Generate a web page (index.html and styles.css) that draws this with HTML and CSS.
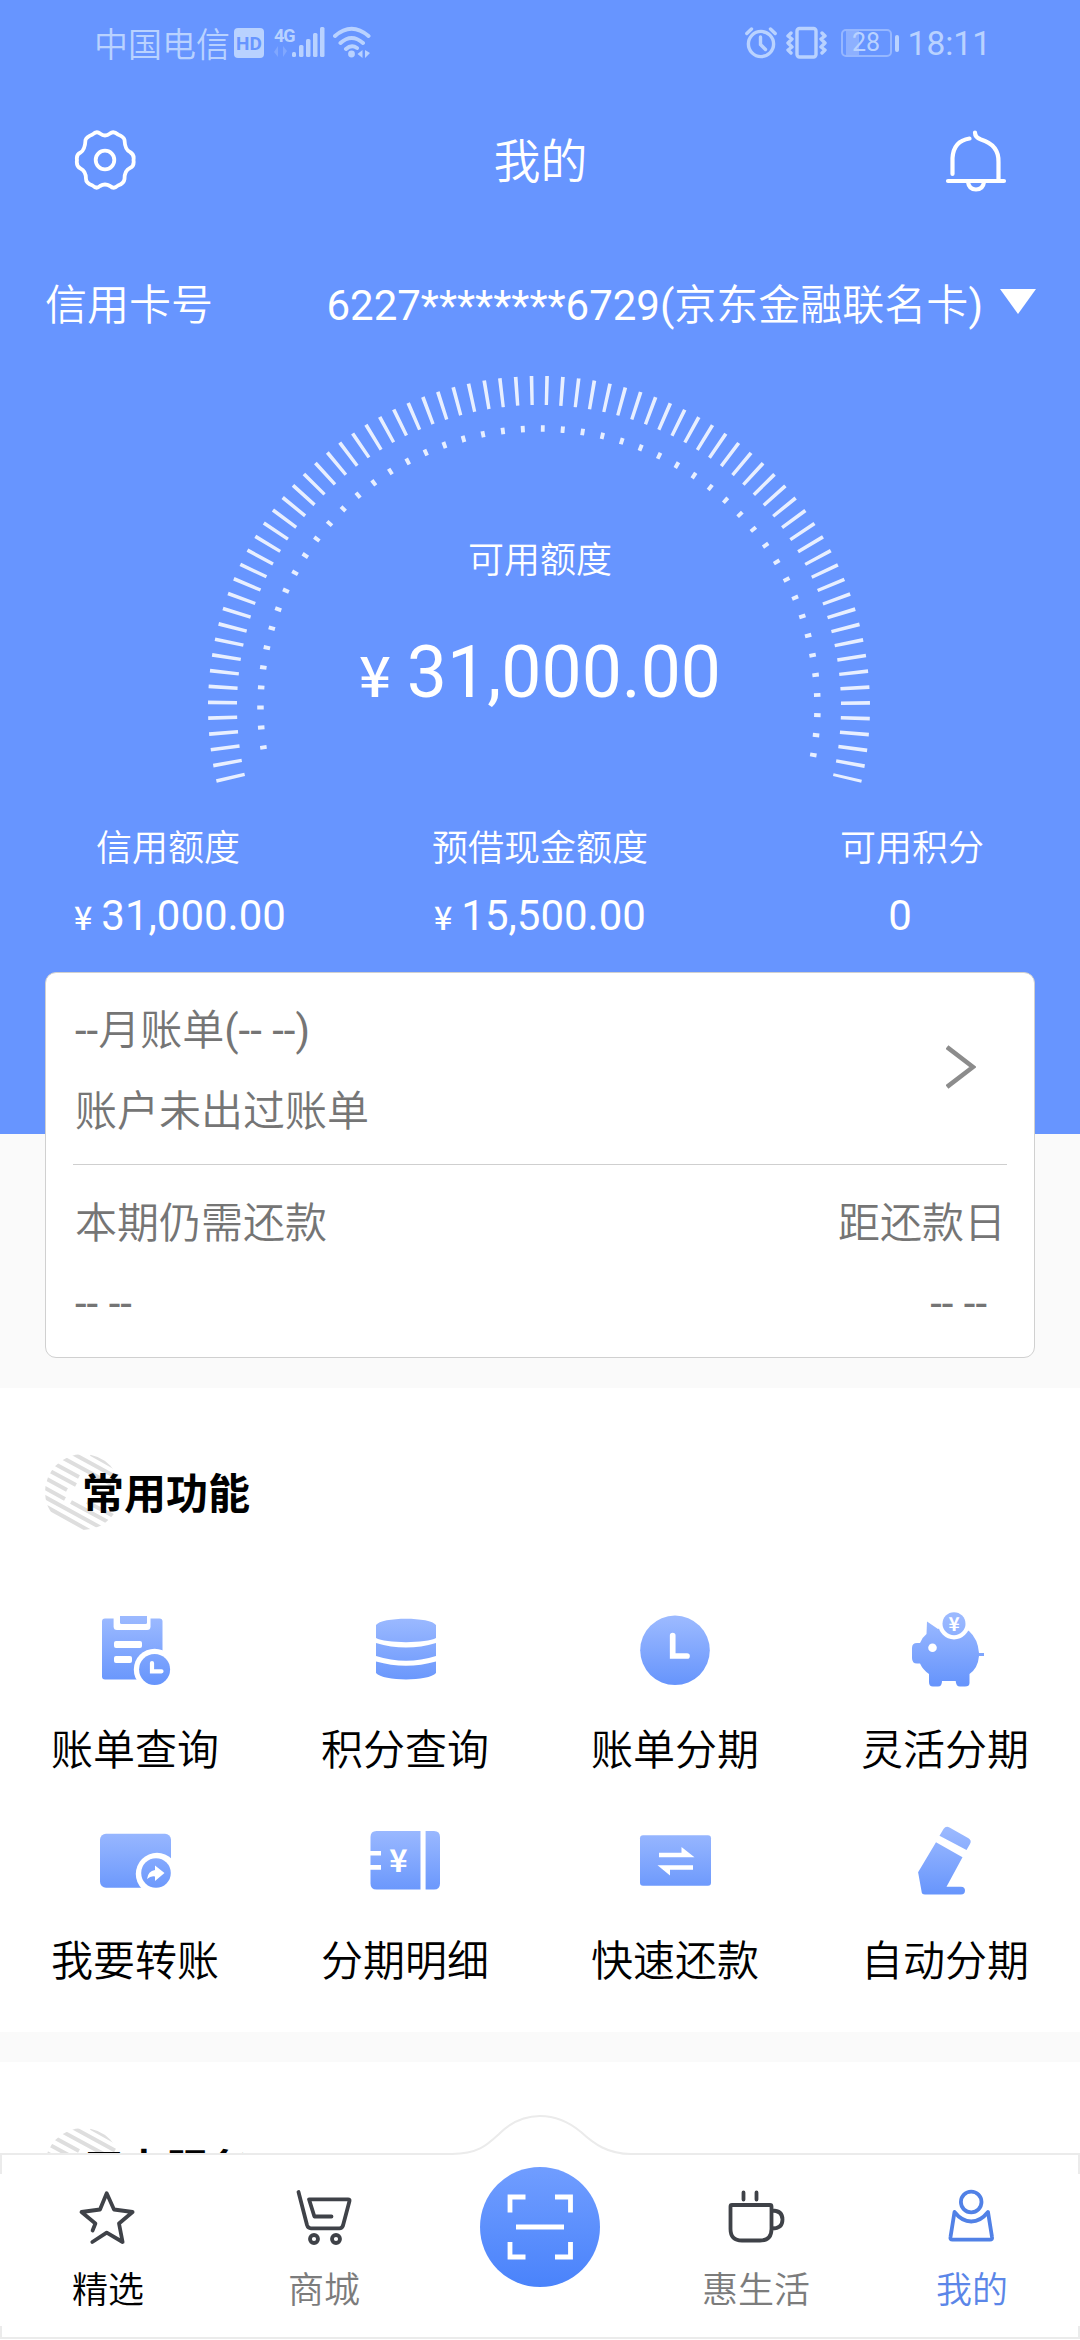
FILE: index.html
```html
<!DOCTYPE html>
<html lang="zh-CN">
<head>
<meta charset="utf-8">
<title>我的</title>
<link rel="stylesheet" href="styles.css">
</head>
<body>
<svg class="defs" width="0" height="0" aria-hidden="true">
  <defs>
    <linearGradient id="fill" gradientUnits="userSpaceOnUse" x1="0" y1="8" x2="0" y2="74">
      <stop offset="0" stop-color="#9bb9ff"/><stop offset="1" stop-color="#6795fc"/>
    </linearGradient>
    <linearGradient id="scan" x1="0" y1="0" x2="0" y2="1">
      <stop offset="0" stop-color="#709dff"/><stop offset="1" stop-color="#4a83fb"/>
    </linearGradient>
    <clipPath id="disc"><circle cx="38" cy="38" r="38"/></clipPath>
    <symbol id="stripes" viewBox="0 0 76 76">
      <g clip-path="url(#disc)" stroke="#dedede" stroke-width="4">
        <path d="M46 0L70 13.500M26-1.500L70 22.500M18 4L66 30M10 10L34 23M5 17L31 31M0 24L22 36M-2 33L20 45M-2 42L60 76M-2 51L50 80M26 48L76 75M42 48L76 66"/>
      </g>
    </symbol>
  </defs>
</svg>
<div class="screen">
  <header class="hero">
    <div class="status">
      <div class="status-side">
        <span class="carrier">中国电信</span>
        <span class="hd">HD</span>
        <svg class="signal" width="52" height="34" viewBox="0 0 52 34">
          <text x="0" y="15.500" class="net">4G</text>
          <path d="M4 20v11l-4-5zM9 31V20l4 5z" opacity=".3"/>
          <rect x="18" y="26" width="4" height="5" rx="1.500"/><rect x="25" y="19" width="4.500" height="12" rx="1.500"/><rect x="32" y="13" width="4.500" height="18" rx="1.500"/><rect x="39" y="7" width="4.500" height="24" rx="1.500"/><rect x="46" y="1" width="4.500" height="30" rx="1.500"/>
        </svg>
        <svg class="wifi" width="38" height="34" viewBox="0 0 38 34">
          <path d="M2 10Q18.500-4.500 35.500 10M7.500 17Q18.500 7 30 17M13 23Q18.500 18 24 22" fill="none" stroke="currentColor" stroke-width="4" stroke-linecap="round"/>
          <circle cx="18.500" cy="28" r="3.400"/><path d="M29.500 24v8l-5-4zM32 32v-8l5 3z"/>
        </svg>
      </div>
      <div class="status-side">
        <svg class="alarm" width="32" height="34" viewBox="0 0 32 34">
          <g fill="none" stroke="currentColor" stroke-width="3.400" stroke-linecap="round"><circle cx="16" cy="18" r="12.600"/><path d="M15.500 11v7.500l5 5M1.800 7.500L6.500 3M30.200 7.500L25.500 3"/></g>
        </svg>
        <svg class="vibrate" width="41" height="34" viewBox="0 0 41 34">
          <g fill="none" stroke="currentColor" stroke-width="3.400" stroke-linecap="round" stroke-linejoin="round"><rect x="11" y="2.500" width="19" height="28.500" rx="2.500"/><path d="M5 7L2 10l4 3-4 4 4 4-4 3 3 3M36 7l3 3-4 3 4 4-4 4 4 3-3 3"/></g>
        </svg>
        <span class="battery"><span class="battery-body">28</span><span class="battery-tip"></span></span>
        <span class="time">18:11</span>
      </div>
    </div>
    <div class="titlebar">
      <svg width="64" height="64" viewBox="0 0 64 64" fill="none" stroke="#fff" stroke-width="3.800" stroke-linejoin="round">
        <path d="M19.500 6.500Q23.500 2.500 27 5.500Q32 9.500 37 5.500Q40.500 2.500 45 6.500Q51 9 51.500 12Q52 22 57 24Q61.500 26.500 60.500 32Q61.500 38 57 40Q51.500 42.500 51.500 51Q51 55.500 45 57.500Q41 61.500 37 58Q32 55 27 58Q23.500 61.500 19.500 57.500Q13 55 13 51Q13 43 7.500 40.500Q3 38.500 4 32Q3 26.500 7.500 24.500Q12 22 12.500 12Q13.500 9 19.500 6.500Z"/><circle cx="32" cy="32" r="9.300"/>
      </svg>
      <h1>我的</h1>
      <svg width="64" height="64" viewBox="0 0 64 64" fill="none" stroke="#fff" stroke-width="4.200" stroke-linecap="round">
        <path d="M8.500 46V30Q9.500 13 25.500 10.500M31 4.500Q31 9.500 37 11.500Q55 17 54.500 34V52M4 53H60M24 54Q25 61.500 32 61.500Q39 61.500 40 54"/>
      </svg>
    </div>
    <div class="account">
      <span>信用卡号</span>
      <span class="number"><span class="latin">6227********6729(</span>京东金融联名卡<span class="latin">)</span></span>
      <svg width="36" height="26" viewBox="0 0 36 26"><path d="M0 0H36L18 25Z" fill="#fff"/></svg>
    </div>
    <div class="gauge">
      <svg class="dial" width="1080" height="440" viewBox="0 372 1080 440" fill="none" stroke="#fff">
        <path d="M230.900 779.400A316.500 316.500 0 1 1 847.100 779.400" pathLength="206.440" stroke-width="29" stroke-dasharray=".64 2.1053" opacity=".85"/>
        <path d="M263.700 749.300A278.500 278.500 0 1 1 813 756.800" pathLength="199.040" stroke-width="6.500" stroke-dasharray=".8 3.33" opacity=".85"/>
      </svg>
      <div class="gauge-label">可用额度</div>
      <div class="gauge-value"><span class="yen">¥</span>31,000.00</div>
    </div>
    <div class="stats">
      <div class="stat"><div class="stat-label">信用额度</div><div class="stat-value"><span class="yen">¥</span>31,000.00</div></div>
      <div class="stat"><div class="stat-label">预借现金额度</div><div class="stat-value"><span class="yen">¥</span>15,500.00</div></div>
      <div class="stat"><div class="stat-label">可用积分</div><div class="stat-value">0</div></div>
    </div>
  </header>

  <section class="bill">
    <div class="bill-top">
      <div class="bill-lines"><div><span class="latin">--</span>月账单<span class="latin">(-- --)</span></div><div>账户未出过账单</div></div>
      <svg width="30" height="44" viewBox="0 0 30 44" fill="none" stroke="#8c8c8c" stroke-width="4.600"><path d="M1 2L27 22L1 42"/></svg>
    </div>
    <div class="bill-bottom">
      <div class="due"><div>本期仍需还款</div><div class="latin">-- --</div></div>
      <div class="due due-date"><div>距还款日</div><div class="latin">-- --</div></div>
    </div>
  </section>

  <section class="panel functions">
    <h2 class="heading"><svg width="76" height="76"><use href="#stripes"/></svg><span>常用功能</span></h2>
    <div class="grid">
      <div class="item">
        <svg width="80" height="80" viewBox="0 0 80 80"><rect x="7" y="8.600" width="60.500" height="61" rx="3" fill="url(#fill)"/><path d="M18.600 7V16.500Q18.600 20 22 20H52Q55.500 20 55.500 16.500V7Z" fill="#fff"/><path d="M25 6H52V12.500Q52 14 50.500 14H26.500Q25 14 25 12.500Z" fill="url(#fill)"/><rect x="19" y="31" width="28" height="7" rx="2" fill="#fff"/><rect x="19" y="46" width="18" height="7" rx="2" fill="#fff"/><circle cx="59.600" cy="59.500" r="20.800" fill="#fff"/><circle cx="59.600" cy="59.500" r="15.500" fill="url(#fill)"/><path d="M57 53V61.300H66.500" fill="none" stroke="#fff" stroke-width="4.200" stroke-linecap="round"/></svg>
        <span>账单查询</span></div>
      <div class="item">
        <svg width="80" height="80" viewBox="0 0 80 80" fill="url(#fill)"><path d="M11 15C16 6.500 66 6.500 71 15V28C62 33.500 20 33.500 11 28ZM11 33Q41 42 71 33V46Q41 55.500 11 46ZM11 51.500Q41 60 71 51.500V63C64 71.500 18 71.500 11 63Z"/></svg>
        <span>积分查询</span></div>
      <div class="item">
        <svg width="80" height="80" viewBox="0 0 80 80"><circle cx="40" cy="40.300" r="34.800" fill="url(#fill)"/><path d="M37.700 25.500V46H52" fill="none" stroke="#fff" stroke-width="5.700" stroke-linecap="round"/></svg>
        <span>账单分期</span></div>
      <div class="item">
        <svg width="80" height="80" viewBox="0 0 80 80"><path d="M22 11.500L33 19Q48 12 64 21Q73 29 74 43H79V46H74Q73 58 64.500 64V73Q64.500 76.500 60 76.500H55Q51 76.500 50.700 71H37Q37 76.500 33 76.500H28Q24 76.500 24 72V64Q18 60 15 53.500H12Q7 53.500 7 48V38Q7 33 12 33H15Q17 27.500 21.500 24Z" fill="url(#fill)"/><circle cx="49" cy="13.700" r="15.700" fill="#fff"/><circle cx="49" cy="13.700" r="11.500" fill="url(#fill)"/><circle cx="27.500" cy="37.700" r="4.300" fill="#fff"/><text x="49" y="20.500" class="glyph coin">¥</text></svg>
        <span>灵活分期</span></div>
      <div class="item">
        <svg width="80" height="80" viewBox="0 0 80 80"><rect x="5" y="12.700" width="71" height="54" rx="6" fill="url(#fill)"/><path d="M47 68A20 20 0 0 1 77 38V68Z" fill="#fff"/><circle cx="61" cy="52" r="14.800" fill="url(#fill)"/><path d="M69.500 52L60 44.500V49Q53 50 52 58Q56 54.500 60 55.500V60Z" fill="#fff"/></svg>
        <span>我要转账</span></div>
      <div class="item">
        <svg width="80" height="80" viewBox="0 0 80 80"><path d="M11.500 10H55.500V68.600H11.500Q5.500 68.600 5.500 62.600V48.700H16V44H5.500V34.500H16V30H5.500V16Q5.500 10 11.500 10ZM60.600 10H69Q75 10 75 16V62.600Q75 68.600 69 68.600H60.600Z" fill="url(#fill)"/><text x="33.500" y="50.500" class="glyph">¥</text></svg>
        <span>分期明细</span></div>
      <div class="item">
        <svg width="80" height="80" viewBox="0 0 80 80"><rect x="5" y="14.300" width="71" height="50.500" rx="3" fill="url(#fill)"/><path d="M24 31.700H46.500V26L59.500 36.300H24ZM58 48.700H35V54.500L22.500 44.300H58Z" fill="#fff"/></svg>
        <span>快速还款</span></div>
      <div class="item">
        <svg width="80" height="80" viewBox="0 0 80 80" fill="url(#fill)"><path d="M38.500 8Q41 4.500 44.500 6.500L63.500 17.300Q67 19.500 65 23L61.500 29L34.500 14.700ZM31 21.300L57.500 36.300L41.500 65.700H56Q60 65.700 60 69.500Q60 73.500 56 73.500H20Q16.500 73.500 16.500 70L13.100 51.300Z"/></svg>
        <span>自动分期</span></div>
    </div>
  </section>

  <section class="panel services">
    <h2 class="heading"><svg width="76" height="76"><use href="#stripes"/></svg><span>用卡服务</span></h2>
  </section>

  <nav class="tabbar">
    <svg class="tabbar-bg" width="1080" height="226" viewBox="0 0 1080 226"><path d="M1 60V40H452C478 40 487 31 499 20C511 8 524 2 540 2C556 2 569 8 581 18C594 30 608 40 631 40H1079V60V224H1Z" fill="#fff"/><path d="M1 60V40H452C478 40 487 31 499 20C511 8 524 2 540 2C556 2 569 8 581 18C594 30 608 40 631 40H1079V60M1 212V224H1079V212" fill="none" stroke="#ebebeb" stroke-width="2"/></svg>
    <a class="tab tab-first"><svg width="60" height="60" viewBox="0 0 60 60"><path d="M14.600 43.500L17.400 36.500L3.500 25L22 22.500L28.700 6.300L36 22.500L54.600 25L41 36.500L44.600 55L28.700 45.700L14.300 55"/></svg><span>精选</span></a>
    <a class="tab"><svg width="60" height="60" viewBox="0 0 60 60"><path d="M4.500 5L13 38Q14 41.300 17 41.300H45.500Q48 41.300 49 38.500L55.500 14Q56 12.300 54 12.300H15L20.400 29.500H37.500"/><circle cx="20" cy="52" r="4"/><circle cx="42" cy="52" r="4"/></svg><span>商城</span></a>
    <a class="tab scan" aria-label="扫一扫"><svg width="120" height="120" viewBox="0 0 120 120"><circle cx="60" cy="60" r="60" fill="url(#scan)"/><path d="M45.500 30H30V45.500M75 30H90.500V45.500M30 75V90H45.500M90.500 75V90H75M36 60H84" fill="none" stroke="#fff" stroke-width="4.800"/></svg></a>
    <a class="tab"><svg width="60" height="60" viewBox="0 0 60 60"><path d="M17.500 5.500V12.500M30.500 5.500V12.500M6 18H44Q45.500 18 45.500 19.500V42Q45.500 53.500 34 53.500H16Q4.500 53.500 4.500 42V19.500Q4.500 18 6 18ZM46 23.500Q56.500 23.500 56.500 32.500Q56.500 41.500 46 41.500"/></svg><span>惠生活</span></a>
    <a class="tab active"><svg width="60" height="60" viewBox="0 0 60 60"><circle cx="29.200" cy="15" r="10.300"/><path d="M12.500 25Q20 34.500 29.200 34.500Q38.500 34.500 46 25L50 50Q50.500 52.700 48 52.700H10.500Q8 52.700 8.500 50Z"/></svg><span>我的</span></a>
  </nav>
</div>
</body>
</html>
```
FILE: styles.css
```css
* { box-sizing: border-box; }
body { margin: 0; }
.defs { position: absolute; }
.screen {
  position: relative;
  width: 1080px;
  height: 2340px;
  overflow: hidden;
  background: #fafafa;
  font-family: Roboto, "Noto Sans CJK SC", sans-serif;
  font-weight: 350;
  font-size: 42px;
  color: #000;
}
svg { display: block; flex: none; }
h1, h2 { margin: 0; }
.latin { font-weight: 400; }

.hero { height: 1134px; background: #6795ff; color: #fff; }

.status {
  display: flex;
  justify-content: space-between;
  height: 84px;
  padding: 0 89px 0 94px;
  color: #b9d2ff;
  fill: #b9d2ff;
}
.status-side { display: flex; align-items: center; height: 86px; }
.carrier { margin-top: -2px; font-size: 34px; }
.hd {
  width: 30px;
  height: 30px;
  margin: 0 10px 0 4px;
  border-radius: 4px;
  background: #b9d2ff;
  color: #6795ff;
  font-size: 19px;
  font-weight: 700;
  line-height: 31px;
  text-align: center;
}
.net { font-size: 18px; font-weight: 700; letter-spacing: -1px; }
.signal { margin-right: 7px; overflow: visible; }
.alarm { margin-right: 9px; }
.vibrate { margin-right: 14px; }
.battery { display: flex; align-items: center; gap: 3px; margin-right: 9px; font-weight: 400; }
.battery-body {
  width: 51px;
  height: 28px;
  border: 2px solid #96b7ff;
  border-radius: 5px;
  background: linear-gradient(90deg, transparent 3px, #8db0ff 3px, #8db0ff 16px, transparent 16px);
  font-size: 25px;
  line-height: 24px;
  text-align: center;
}
.battery-tip { width: 4px; height: 17px; border-radius: 2px; background: #b9d2ff; }
.time { font-size: 33.500px; font-weight: 400; }

.titlebar {
  display: flex;
  align-items: center;
  justify-content: space-between;
  height: 152px;
  padding: 0 72px 0 73px;
}
.titlebar h1 { margin-top: -5px; font-size: 47px; font-weight: 350; }

.account { display: flex; align-items: center; height: 136px; padding: 0 44px 0 45px; }
.account > span { margin-top: -6px; }
.account svg { margin-top: -4px; }
.number { margin-left: auto; margin-right: 17px; }

.gauge {
  position: relative;
  height: 440px;
  padding-top: 162px;
  text-align: center;
}
.dial { position: absolute; left: 0; top: 0; }
.gauge-label { font-size: 36px; line-height: 54px; }
.gauge-value { margin-top: 43px; font-size: 71.500px; font-weight: 400; line-height: 84px; }
.yen { font-family: "Noto Sans CJK SC", sans-serif; font-weight: 500; }
.gauge-value .yen { margin-right: 16px; font-size: 56px; line-height: 1; }

.stats { display: grid; grid-template-columns: repeat(3, 360px); padding-top: 10px; text-align: center; }
.stat-label { font-size: 36px; line-height: 54px; }
.stat:first-child .stat-label { padding-right: 24px; }
.stat:last-child .stat-label { padding-left: 24px; }
.stat-value { margin-top: 14px; font-weight: 400; line-height: 52px; }
.stat-value .yen { margin-right: 9px; font-size: 32px; line-height: 1; }

.bill {
  position: relative;
  width: 990px;
  height: 386px;
  margin: -162px auto 0;
  padding: 0 27px;
  border: 1px solid #d0d0d0;
  border-radius: 11px;
  background: #fff;
  color: #757575;
}
.bill-top {
  display: flex;
  align-items: center;
  justify-content: space-between;
  height: 192px;
  padding: 5px 31px 0 2px;
  border-bottom: 1px solid #cfcfcf;
}
.bill-top svg { margin-top: -9px; }
.bill-lines { display: grid; gap: 21px; line-height: 60px; }
.bill-bottom { display: flex; justify-content: space-between; padding: 29px 1px 0 2px; }
.due { display: grid; gap: 20px; align-content: start; line-height: 60px; }
.due-date div:last-child { padding-right: 19px; text-align: right; }

.panel { background: #fff; }
.functions { height: 644px; margin-top: 30px; padding-top: 66px; }
.heading { display: flex; align-items: center; height: 76px; padding-left: 45px; font-size: 42px; font-weight: 700; }
.heading span { position: relative; margin: 6px 0 0 -39px; line-height: 60px; }
.grid { display: grid; grid-template-columns: repeat(4, 270px); row-gap: 42px; padding-top: 80px; }
.item { display: flex; flex-direction: column; align-items: center; gap: 31px; height: 169px; line-height: 60px; }
.glyph { font-family: "Noto Sans CJK SC", sans-serif; font-size: 31px; font-weight: 700; text-anchor: middle; fill: #fff; }
.coin { font-size: 19px; }
.services { height: 278px; margin-top: 30px; padding-top: 66px; }
.services .heading span { margin-top: 10px; }

.tabbar {
  position: absolute;
  left: 0;
  bottom: 0;
  display: grid;
  grid-template-columns: repeat(5, 216px);
  height: 226px;
}
.tabbar-bg { position: absolute; left: 0; top: 0; }
.tab {
  position: relative;
  display: flex;
  flex-direction: column;
  align-items: center;
  gap: 17px;
  padding-top: 73px;
  color: #7c7c7c;
  font-size: 36px;
  line-height: 54px;
}
.tab svg { fill: none; stroke: #3f4248; stroke-width: 3.800px; stroke-linecap: round; stroke-linejoin: round; }
.tab-first { color: #000; }
.scan { padding-top: 53px; }
.scan svg { stroke: none; stroke-linecap: butt; stroke-linejoin: miter; }
.active { color: #5b86e8; }
.active svg { stroke: #5181e6; }
```
